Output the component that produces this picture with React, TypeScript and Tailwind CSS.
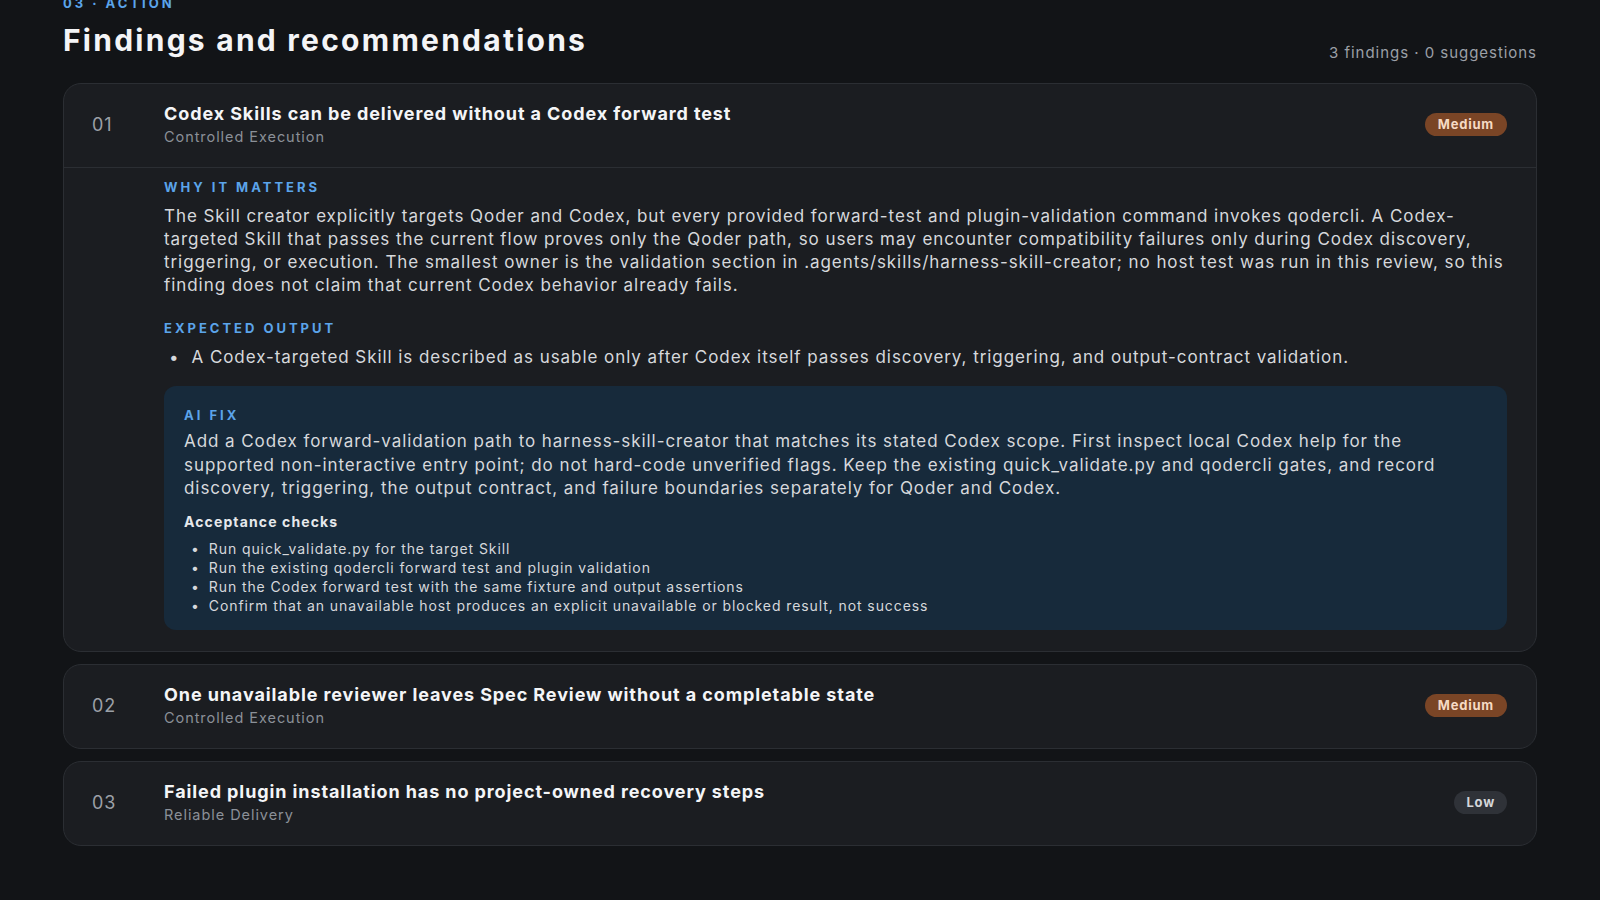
import React from 'react';

type Finding = {
  id: string;
  title: string;
  area: string;
  severity: 'Medium' | 'Low';
  open?: boolean;
};

const FINDINGS: Finding[] = [
  { id: '01', title: 'Codex Skills can be delivered without a Codex forward test', area: 'Controlled Execution', severity: 'Medium', open: true },
  { id: '02', title: 'One unavailable reviewer leaves Spec Review without a completable state', area: 'Controlled Execution', severity: 'Medium' },
  { id: '03', title: 'Failed plugin installation has no project-owned recovery steps', area: 'Reliable Delivery', severity: 'Low' },
];

const CHECKS = [
  'Run quick_validate.py for the target Skill',
  'Run the existing qodercli forward test and plugin validation',
  'Run the Codex forward test with the same fixture and output assertions',
  'Confirm that an unavailable host produces an explicit unavailable or blocked result, not success',
];

function Badge({ level }: { level: Finding['severity'] }) {
  return level === 'Medium' ? (
    <span className="rounded-full bg-[#7a4526] px-[13px] py-[3px] text-[13px] leading-[17px] font-bold tracking-[0.06em] text-[#f6dac4]">Medium</span>
  ) : (
    <span className="rounded-full bg-[#2f3238] px-[12px] py-[3px] text-[13px] leading-[17px] font-bold tracking-[0.06em] text-[#d4d6da]">Low</span>
  );
}

function Label({ children, tight }: { children: React.ReactNode; tight?: boolean }) {
  return (
    <div className={`text-[13px] leading-[16px] font-bold tracking-[0.23em] text-[#5ba4ea] ${tight ? 'mb-[7px]' : 'mb-[10px]'}`}>
      {children}
    </div>
  );
}

function FindingCard({ f }: { f: Finding }) {
  return (
    <div className="rounded-[18px] border border-[#2b2e33] bg-[#1b1d21]">
      <div className={`flex items-center pl-[28px] pr-[29px] pt-[18px] pb-[20px] ${f.open ? 'border-b border-[#2b2e33]' : ''}`}>
        <div className="w-[72px] text-[18px] tracking-[0.05em] text-[#9ca0a7]">{f.id}</div>
        <div className="flex-1">
          <div className="text-[18px] leading-[23px] font-bold tracking-[0.05em] text-[#f4f5f7]">{f.title}</div>
          <div className="mt-[2px] text-[14.5px] leading-[20px] tracking-[0.065em] text-[#8b9098]">{f.area}</div>
        </div>
        <Badge level={f.severity} />
      </div>
      {f.open && (
        <div className="pl-[100px] pr-[29px] pt-[11px] pb-[21px]">
          <Label>WHY IT MATTERS</Label>
          <p className="text-[17px] leading-[23.1px] tracking-[0.055em] text-[#d6d8dc]">
            The Skill creator explicitly targets Qoder and Codex, but every provided forward-test and plugin-validation command invokes qodercli. A Codex-targeted Skill that passes the current flow proves only the Qoder path, so users may encounter compatibility failures only during Codex discovery, triggering, or execution. The smallest owner is the validation section in .agents/skills/harness-skill-creator; no host test was run in this review, so this finding does not claim that current Codex behavior already fails.
          </p>
          <div className="mt-[23px]">
            <Label>EXPECTED OUTPUT</Label>
          </div>
          <ul className="mt-[1px] text-[17px] leading-[23.1px] tracking-[0.055em] text-[#d6d8dc]">
            <li className="flex gap-[12px] pl-[5px]">
              <span>•</span>
              <span>A Codex-targeted Skill is described as usable only after Codex itself passes discovery, triggering, and output-contract validation.</span>
            </li>
          </ul>
          <div className="mt-[17px] rounded-[12px] bg-[#172a3b] px-[20px] pt-[21px] pb-[15px]">
            <Label tight>AI FIX</Label>
            <p className="text-[17px] leading-[23.1px] tracking-[0.055em] text-[#d6d8dc]">
              Add a Codex forward-validation path to harness-skill-creator that matches its stated Codex scope. First inspect local Codex help for the supported non-interactive entry point; do not hard-code unverified flags. Keep the existing quick_validate.py and qodercli gates, and record discovery, triggering, the output contract, and failure boundaries separately for Qoder and Codex.
            </p>
            <div className="mt-[12px] text-[14px] leading-[20px] font-bold tracking-[0.08em] text-[#e6e8eb]">Acceptance checks</div>
            <ul className="mt-[7px] text-[14px] leading-[19px] tracking-[0.065em] text-[#d6d8dc]">
              {CHECKS.map((c) => (
                <li key={c} className="flex gap-[9px] pl-[7px]">
                  <span>•</span>
                  <span>{c}</span>
                </li>
              ))}
            </ul>
          </div>
        </div>
      )}
    </div>
  );
}

export default function App() {
  return (
    <div className="min-h-screen w-full overflow-hidden bg-[#121417] px-[63px] font-['Inter','Noto_Sans',sans-serif]">
      <div className="-mt-[5px] text-[13px] leading-[16px] font-bold tracking-[0.23em] text-[#5ba4ea]">03 · ACTION</div>
      <div className="flex items-start justify-between">
        <h1 className="mt-[9px] text-[30px] leading-[40px] font-bold tracking-[0.075em] text-[#f4f5f7]">Findings and recommendations</h1>
        <div className="mt-[32px] text-[15px] leading-[20px] tracking-[0.064em] text-[#9ca0a7]">3 findings · 0 suggestions</div>
      </div>
      <div className="mt-[20px] flex flex-col gap-[12px]">
        {FINDINGS.map((f) => (
          <FindingCard key={f.id} f={f} />
        ))}
      </div>
    </div>
  );
}
